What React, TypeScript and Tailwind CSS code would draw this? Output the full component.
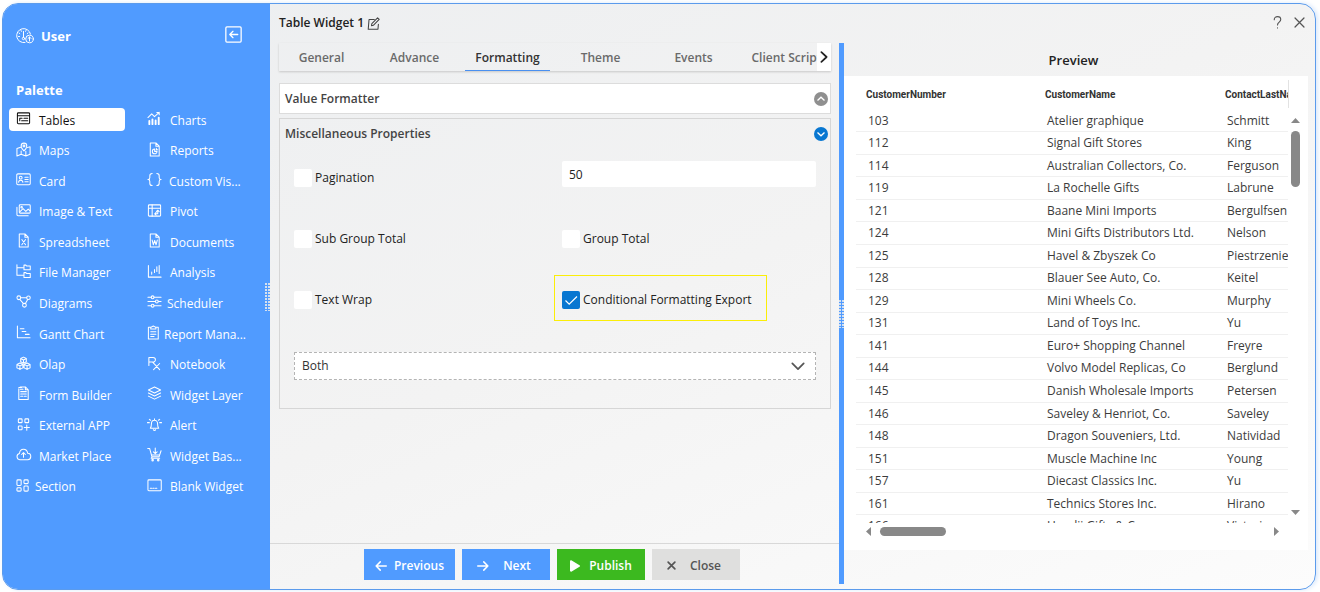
import { useState, type ReactNode } from "react";
import clsx from "clsx";

interface PaletteItem {
  label: string;
  /** icon drawn on a 16 unit grid */
  icon: ReactNode;
  /** a few glyphs sit closer to their label */
  iconClass?: string;
}

const PALETTE: PaletteItem[] = [
  {
    label: "Tables",
    icon: <><rect x="1.5" y="2" width="13" height="11.5" rx="1" /><path d="M1.5 5h13M4 7.8h2.5M8.500 7.800h4M6 10.500h6.500M4 7.800v2.700" /></>,
  },
  {
    label: "Charts",
    icon: <><path d="M1 7l4-4 3 3 5-4.500M10.500 1.500H13V4" /><path d="M2.500 10.500v3.500M5.800 9v5M9.200 10v4M12.500 7v7" strokeWidth="2" /></>,
  },
  {
    label: "Maps",
    icon: <><path d="M5 5.500L1 7v8l4.500-2 5 2 4.500-2V5l-3 1M5.500 9.500V13M10.500 10v5" /><path d="M8.500 9.500C6.500 7.500 5.500 6 5.500 4.200a3 3 0 016 0c0 1.800-1 3.300-3 5.300z" /><circle cx="8.500" cy="4.200" r="1" /></>,
  },
  {
    label: "Reports",
    icon: <><path d="M3.500 1h6L13 4.500V15H3.500zM9.500 1v3.500H13" /><path d="M8.200 7.500a2.500 2.500 0 102.500 2.500H8.200z" /><path d="M10 6.800v1.400h1.400" /></>,
  },
  {
    label: "Card",
    icon: <><rect x=".8" y="2" width="14.400" height="11.500" rx="1.200" /><circle cx="5" cy="6" r="1.500" /><path d="M2.800 11c0-3 4.500-3 4.500 0M9.500 5.500h3.500M9.500 8h3.500M9.500 10.500h3.500" /></>,
  },
  {
    label: "Custom Vis...",
    icon: <path d="M5.500 1.500C3.500 1.500 3 2.500 3 4v2c0 1.200-.8 2-2 2 1.200 0 2 .8 2 2v2c0 1.500.5 2.500 2.500 2.500M10.500 1.500c2 0 2.500 1 2.500 2.500v2c0 1.200.8 2 2 2-1.200 0-2 .8-2 2v2c0 1.500-.5 2.500-2.500 2.500" />,
    iconClass: "w-[15px]",
  },
  {
    label: "Image & Text",
    icon: <><rect x="3.500" y="1.800" width="11.700" height="9" rx="1" /><path d="M1 4.500v8c0 .8.500 1 1.200 1H13M4 9.500l3.500-3.500 3 3L13 6.500l2 2" /><circle cx="6" cy="4.500" r=".8" /></>,
  },
  {
    label: "Pivot",
    icon: <><rect x="1.500" y="2" width="13" height="12" rx="1" /><path d="M1.500 5.500h13M5.500 2v12M8.500 11.500h3V8M10 9.200L11.500 7.700 13 9.200M9.700 10l-1.500 1.500L9.700 13" /></>,
  },
  {
    label: "Spreadsheet",
    icon: <path d="M3.500 1h6L13 4.500V15H3.500zM9.500 1v3.500H13M6.200 7l4 5.500M10.200 7l-4 5.500" />,
  },
  {
    label: "Documents",
    icon: <path d="M3.500 1h6L13 4.500V15H3.500zM9.500 1v3.500H13M5.500 7.500l1.200 5 1.500-4.500 1.500 4.500 1.300-5" />,
  },
  {
    label: "File Manager",
    icon: <><path d="M1 .8v11.200h7M1 4h7" /><path d="M8.500 1.200h2l1 1h3.700v4H8.500zM8.500 9.200h2l1 1h3.700v4.300H8.500z" /></>,
  },
  {
    label: "Analysis",
    icon: <path d="M1.500 1.500V14h13.500M5 8.500V11M8 6v3M10.500 3v5M13 1.500V10" />,
  },
  {
    label: "Diagrams",
    icon: <><circle cx="3" cy="4" r="2" /><circle cx="13.300" cy="4" r="1.900" /><circle cx="9" cy="12" r="2" /><path d="M5 4h6.400M4 5.800l4 4.400M12.500 5.800L10 10.200" /></>,
  },
  {
    label: "Scheduler",
    icon: <><path d="M1 3.500h3.500M7.500 3.500H15M1 8h8M12 8h3M1 12.500h3.500M7.500 12.500H15" /><circle cx="6" cy="3.500" r="1.500" /><circle cx="10.500" cy="8" r="1.500" /><circle cx="6" cy="12.500" r="1.500" /></>,
    iconClass: "w-[13px]",
  },
  {
    label: "Gantt Chart",
    icon: <path d="M1.500 1v12.500H15M4.500 4h4M6.500 7h4M10 10h4" />,
  },
  {
    label: "Report Mana...",
    icon: <><path d="M4 2.500H1.500V15H12V2.500H9.500" /><path d="M4 4.300V2.500L6.700 1l2.800 1.500v1.800zM4 7.300h5.500M4 9.800h5.500M4 12.300h3.500" /></>,
    iconClass: "w-[10px]",
  },
  {
    label: "Olap",
    icon: <path d="M8 1.200l3 1.500v3.500L8 7.700 5 6.200V2.700zM5 2.700l3 1.500 3-1.500M8 4.200v3.500M4.200 7.500l3.200 1.500v3.700l-3.200 1.600L1 12.700V9zM1 9l3.200 1.500L7.400 9M4.200 10.500v3.800M11.800 7.500L15 9v3.700l-3.200 1.600-3.200-1.600V9zM8.600 9l3.200 1.500L15 9M11.800 10.500v3.800" />,
  },
  {
    label: "Notebook",
    icon: <path d="M2 10V1.500h4.500a2.500 2.500 0 010 5H2M6 6.500l7.500 8M13.500 8L7 14.500" />,
  },
  {
    label: "Form Builder",
    icon: <><path d="M4.500 1H10l3 3v10.500H3V3M10 1v3h3" /><path d="M5 6h6M5 8.500h6M5 11h2.500M9 11h2M3 1.500h3M4.500 3.500h3" /></>,
  },
  {
    label: "Widget Layer",
    icon: <path d="M8 1l6.500 3.200L8 7.500 1.500 4.200zM1.500 7.500L8 10.700l6.500-3.200M1.500 10.800L8 14l6.500-3.200" />,
  },
  {
    label: "External APP",
    icon: <><rect x="2.500" y="2" width="4" height="4" rx=".8" /><rect x="9.500" y="2" width="4" height="4" rx=".8" /><rect x="2.500" y="9.500" width="4" height="4" rx=".8" /><path d="M11.500 8.500V14M8.800 11.200h5.500" /></>,
  },
  {
    label: "Alert",
    icon: <><path d="M3.500 12h9c-1-1-1.200-2-1.200-4.500C11.300 5 10 3.500 8 3.500S4.700 5 4.700 7.500C4.700 10 4.500 11 3.500 12zM8 3.500V2M6.800 13.500c.5 1 1.900 1 2.400 0" /><path d="M2.500 2.500l1.300 1M13.500 2.500l-1.300 1M.5 6h2M13.500 6h2" /></>,
  },
  {
    label: "Market Place",
    icon: <><path d="M4 13.500a3.300 3.300 0 01-.3-6.500C4 4 6 2.500 8 2.500s4 1.500 4.500 4.200a3.400 3.400 0 01-.3 6.800z" /><path d="M8 11V6M6 8l2-2 2 2" /></>,
  },
  {
    label: "Widget Bas...",
    icon: <><path d="M.8 1.500h2l2.500 9h7.500L15 4M5.500 10.500L4.500 12h9" /><path d="M8.800 1v6M6.800 5.200l2 2 2-2M5 8.500h8.200" /><circle cx="6" cy="14" r=".8" /><circle cx="12" cy="14" r=".8" /></>,
  },
  {
    label: "Section",
    icon: <><rect x="1" y="2" width="4.500" height="6" rx="1" /><rect x="8.500" y="2" width="4.500" height="4" rx="1" /><rect x="1" y="10.500" width="4.500" height="3.500" rx="1" /><rect x="8.500" y="8.500" width="4.500" height="5.500" rx="1" /></>,
    iconClass: "w-[12px]",
  },
  {
    label: "Blank Widget",
    icon: <><rect x="1" y="2" width="14.200" height="11.500" rx="1" /><path d="M3.500 11h1.500M6.200 11h1.500M9 11h1.500" /></>,
  },
];

const TABS = ["General", "Advance", "Formatting", "Theme", "Events", "Client Script"];

const CUSTOMERS = [
  [103, "Atelier graphique", "Schmitt"],
  [112, "Signal Gift Stores", "King"],
  [114, "Australian Collectors, Co.", "Ferguson"],
  [119, "La Rochelle Gifts", "Labrune"],
  [121, "Baane Mini Imports", "Bergulfsen"],
  [124, "Mini Gifts Distributors Ltd.", "Nelson"],
  [125, "Havel & Zbyszek Co", "Piestrzeniewicz"],
  [128, "Blauer See Auto, Co.", "Keitel"],
  [129, "Mini Wheels Co.", "Murphy"],
  [131, "Land of Toys Inc.", "Yu"],
  [141, "Euro+ Shopping Channel", "Freyre"],
  [144, "Volvo Model Replicas, Co", "Berglund"],
  [145, "Danish Wholesale Imports", "Petersen"],
  [146, "Saveley & Henriot, Co.", "Saveley"],
  [148, "Dragon Souveniers, Ltd.", "Natividad"],
  [151, "Muscle Machine Inc", "Young"],
  [157, "Diecast Classics Inc.", "Yu"],
  [161, "Technics Stores Inc.", "Hirano"],
  [166, "Handji Gifts & Co", "Victorino"],
];

function Icon({ children, className = "w-4 h-4", weight = 1 }: { children: ReactNode; className?: string; weight?: number }) {
  return (
    <svg viewBox="0 0 16 16" className={clsx("shrink-0 overflow-visible", className)} fill="none" stroke="currentColor" strokeWidth={weight} strokeLinecap="round" strokeLinejoin="round" aria-hidden="true">
      {children}
    </svg>
  );
}

/** Dotted drag handle that sits on a splitter edge. */
function Grip({ className }: { className: string }) {
  return (
    <svg viewBox="0 0 5 28" className={clsx("absolute w-[5px] h-7", className)} aria-hidden="true">
      <path d="M1 0v28M4 0v28" stroke="#d5e0ee" strokeWidth="2" strokeDasharray="2 1" />
    </svg>
  );
}

function Sidebar() {
  const [active, setActive] = useState("Tables");

  return (
    <aside className="relative w-[267px] shrink-0 bg-[#509bff] text-white">
      <div className="flex items-start justify-between pl-3 pr-7 pt-[22px]">
        <div className="flex items-center gap-1.5">
          <svg viewBox="0 0 20 18" className="w-5 h-[18px]" fill="none" stroke="currentColor" strokeLinecap="round" aria-hidden="true">
            <path d="M10 15.500A7 7 0 1 1 15.500 7" />
            <path d="M8.500 4.500v6M4 6l.8.600M13 6l-.8.600M3.500 9.500h1M6 3.500l.4.800M11 3.500l-.4.800" />
            <circle cx="8.500" cy="11.500" r="1.200" />
            <circle cx="14.500" cy="12" r="3.800" />
            <path d="M14.500 14v-4M13 11.500l1.500-1.500 1.500 1.500" />
          </svg>
          <span className="text-[13px] leading-5 font-bold">User</span>
        </div>
        <button aria-label="Collapse palette" className="cursor-pointer">
          <Icon className="w-[17px] h-[17px]" weight={1.2}><rect x=".8" y=".8" width="14.400" height="14.400" rx="1" /><path d="M12 8H4.500M7.500 5l-3 3 3 3" /></Icon>
        </button>
      </div>
      <h2 className="pl-[13px] pt-[34px] text-[13px] leading-5 font-bold">Palette</h2>
      <nav className="grid h-[397px] auto-rows-fr grid-cols-[116px_1fr] items-center gap-x-[15px] pl-[6px] pr-2 mt-1">
        {PALETTE.map((item) => (
          <button
            key={item.label}
            onClick={() => setActive(item.label)}
            className={clsx(
              "flex h-[23px] min-w-0 items-center gap-[7px] rounded-[4px] pl-[7px] pt-[3px] text-left text-[12px] leading-5 whitespace-nowrap cursor-pointer",
              active === item.label && "bg-white text-[#111]",
            )}
          >
            <span className={clsx("flex -mt-1", item.iconClass ?? "w-4")}><Icon className="w-[15px] h-[15px]" weight={1.1}>{item.icon}</Icon></span>
            {item.label}
          </button>
        ))}
      </nav>
      <Grip className="right-0 top-[279px]" />
    </aside>
  );
}

function CheckField({ label, defaultChecked = false }: { label: string; defaultChecked?: boolean }) {
  return (
    <label className="flex items-center gap-[3px] text-[12px] leading-5 text-[#222]">
      <span className="grid">
        <input type="checkbox" defaultChecked={defaultChecked} className="peer col-start-1 row-start-1 w-[18px] h-[18px] appearance-none rounded-[2px] bg-white checked:bg-[#0877d1]" />
        <svg viewBox="0 0 18 18" className="pointer-events-none col-start-1 row-start-1 hidden w-[18px] h-[18px] peer-checked:block" fill="none" stroke="#fff" strokeWidth="1.200" aria-hidden="true">
          <path d="M3.500 9.500l3.700 3.700L15 5.500" />
        </svg>
      </span>
      {label}
    </label>
  );
}

function PanelHeading({ title, open }: { title: string; open: boolean }) {
  return (
    <button aria-expanded={open} className="flex w-full items-center justify-between pl-[5px] pr-[2px] h-[29px] cursor-pointer">
      <span className="text-[12px] leading-5 font-semibold text-[#444]">{title}</span>
      <svg viewBox="0 0 14 14" className="w-[14px] h-[14px]" fill="none" aria-hidden="true">
        <circle cx="7" cy="7" r="7" fill={open ? "#0877d1" : "#8f8f8f"} />
        <path d={open ? "M3.500 5.500L7 8.800l3.500-3.300" : "M3.500 8.500L7 5.200l3.500 3.300"} stroke="#fff" strokeWidth="1.300" />
      </svg>
    </button>
  );
}

function Editor() {
  const [tab, setTab] = useState("Formatting");

  return (
    <main className="flex min-w-0 flex-1 flex-col">
      <div className="flex flex-1 flex-col pl-[9px] pr-2">
        <div className="flex items-center gap-[3px] pt-[9px] pb-[10px]">
          <h1 className="text-[12px] leading-5 font-semibold text-[#222]">Table Widget 1</h1>
          <button aria-label="Rename widget" className="text-[#444] cursor-pointer">
            <Icon className="w-[13px] h-[13px]" weight={1.3}>
              <path d="M9 3H2.500L1.500 15H13.500L14 9" />
              <path d="M6 8.200L13 1l2 2-7.200 7.200-2.300.5z" />
            </Icon>
          </button>
        </div>

        <div className="flex h-[28px] shadow-[0_1px_2px_#c8c8c8]">
          <div role="tablist" className="flex min-w-0 flex-1 gap-2 overflow-hidden">
            {TABS.map((name) => (
              <button
                key={name}
                role="tab"
                aria-selected={tab === name}
                onClick={() => setTab(name)}
                className={clsx(
                  "w-[85px] shrink-0 border-b pt-[3px] text-[12px] leading-5 font-semibold whitespace-nowrap cursor-pointer",
                  tab === name ? "border-[#4a90f0] text-[#333]" : "border-transparent text-[#6a6a6a]",
                )}
              >
                {name}
              </button>
            ))}
          </div>
          <button aria-label="More tabs" className="flex w-[14px] shrink-0 items-center justify-center bg-white text-[#222] cursor-pointer">
            <Icon className="w-[14px] h-[14px]" weight={2}><path d="M5 2.500L11 8l-6 5.500" /></Icon>
          </button>
        </div>

        <section className="mt-3 border border-[#dcdcdc] bg-white">
          <PanelHeading title="Value Formatter" open={false} />
        </section>

        <section className="mt-1 border border-[#d6d6d6] pb-7">
          <PanelHeading title="Miscellaneous Properties" open />
          <div className="grid grid-cols-2 gap-x-[14px] px-[14px] pt-[13px]">
            <div className="flex h-[34px] items-center"><CheckField label="Pagination" /></div>
            <input aria-label="Rows per page" defaultValue="50" className="h-[26px] w-full rounded-[2px] bg-white px-[7px] text-[12px] text-[#222] outline-none" />
            <div className="flex h-[88px] items-center"><CheckField label="Sub Group Total" /></div>
            <div className="flex h-[88px] items-center"><CheckField label="Group Total" /></div>
            <div className="flex h-[34px] items-center"><CheckField label="Text Wrap" /></div>
            <div className="-mt-2 -mb-1 -ml-2 flex h-[46px] w-[213px] items-center border border-[#fbee08] pl-[7px] pt-1">
              <CheckField label="Conditional Formatting Export" defaultChecked />
            </div>
          </div>
          <div className="mx-[14px] mt-[35px] grid items-center border border-dashed border-[#b4b4b4] bg-white">
            <select aria-label="Export mode" className="col-start-1 row-start-1 h-[26px] w-full appearance-none pl-[7px] text-[12px] text-[#333] outline-none">
              <option>Both</option>
            </select>
            <span className="pointer-events-none col-start-1 row-start-1 mr-[10px] justify-self-end text-[#555]">
              <Icon className="w-[14px] h-[14px]" weight={2}><path d="M1.500 5L8 11.500 14.500 5" /></Icon>
            </span>
          </div>
        </section>
      </div>

      <footer className="flex justify-center gap-[7px] border-t border-[#d8d8d8] pt-[5px] pb-[9px] pr-[5px] mt-4 text-[12px] leading-5 font-semibold text-white">
        <button className="flex h-[31px] w-[91px] items-center justify-center gap-[7px] bg-[#509bff] pt-0.5 cursor-pointer">
          <Icon className="w-3 h-3" weight={2}><path d="M15 8H1.500M7 2.500L1.500 8 7 13.500" /></Icon>
          Previous
        </button>
        <button className="flex h-[31px] w-[88px] items-center justify-center gap-[14px] bg-[#509bff] pt-0.5 pr-1 cursor-pointer">
          <Icon className="w-3 h-3" weight={2}><path d="M1 8h13.500M9 2.500L14.500 8 9 13.500" /></Icon>
          Next
        </button>
        <button className="flex h-[31px] w-[88px] items-center justify-center gap-[9px] bg-[#3cb91f] pt-0.5 cursor-pointer">
          <svg viewBox="0 0 10 12" className="w-[10px] h-3" fill="currentColor" aria-hidden="true"><path d="M0 1.500C0 .5.800 0 1.700.500L9.500 5.200c.700.400.700 1.200 0 1.600L1.700 11.500C.800 12 0 11.500 0 10.500z" /></svg>
          Publish
        </button>
        <button className="flex h-[31px] w-[88px] items-center justify-center gap-[14px] bg-[#dfdfde] pt-0.5 pr-1 text-[#555] cursor-pointer">
          <Icon className="w-[9px] h-[9px]" weight={3}><path d="M2 2l12 12M14 2L2 14" /></Icon>
          Close
        </button>
      </footer>
    </main>
  );
}

function Preview() {
  return (
    <section className="flex w-[471px] shrink-0 flex-col">
      <div className="flex h-[37px] items-center justify-end gap-[10px] pr-[10px] text-[#555]">
        <button aria-label="Help" className="cursor-pointer">
          <Icon className="w-[13px] h-[13px]" weight={1.4}><path d="M4 4.500C4 2 5.800.8 8 .8s4 1.400 4 3.600C12 7.500 8 7.500 8 11M8 14.500v.3" /></Icon>
        </button>
        <button aria-label="Close editor" className="cursor-pointer">
          <Icon className="w-[11px] h-[11px]" weight={1.8}><path d="M1.500 1.500l13 13M14.500 1.500l-13 13" /></Icon>
        </button>
      </div>
      <h2 className="pr-3 pt-[9px] pb-[6px] text-center text-[13px] leading-5 font-semibold text-[#222]">Preview</h2>

      <div className="mr-[7px] mb-[39px] flex min-h-0 flex-1 flex-col bg-white pl-3">
        <div className="flex min-h-0 flex-1">
          <div className="min-w-0 flex-1 overflow-hidden">
            <table className="h-[462px] w-[540px] table-fixed border-collapse text-left text-[12px] leading-4 text-[#3c3c3c]">
              <thead>
                <tr className="h-[34px] font-['Roboto'] text-[10px] text-[#333]">
                  <th className="pl-[10px] pt-1 font-bold">CustomerNumber</th>
                  <th className="pl-[9px] pt-1 font-bold">CustomerName</th>
                  <th className="pl-[9px] pt-1 font-bold">ContactLastName</th>
                </tr>
              </thead>
              <tbody>
                {CUSTOMERS.map(([id, name, contact]) => (
                  <tr key={id} className="border-b border-[#f0f0f0]">
                    <td className="pl-3">{id}</td>
                    <td className="pl-[11px]">{name}</td>
                    <td className="pl-[11px]">{contact}</td>
                  </tr>
                ))}
              </tbody>
            </table>
          </div>
          <div className="flex w-5 shrink-0 flex-col text-[#888]">
            <div className="mt-1 h-7 border-l border-[#e2e2e2]" />
            <div className="flex flex-1 flex-col items-center pt-[10px] pb-2 pr-1.5">
              <svg viewBox="0 0 9 5" className="w-[9px] h-[5px]" fill="currentColor" aria-hidden="true"><path d="M0 5L4.500 0 9 5z" /></svg>
              <div className="mt-2 h-14 w-[9px] rounded-full bg-[#888]" />
              <svg viewBox="0 0 9 5" className="mt-auto w-[9px] h-[5px]" fill="currentColor" aria-hidden="true"><path d="M0 0h9L4.500 5z" /></svg>
            </div>
          </div>
        </div>
        <div className="flex h-[27px] items-start pl-[10px] pr-[29px] pt-1 text-[#888]">
          <svg viewBox="0 0 5 9" className="w-[5px] h-[9px]" fill="currentColor" aria-hidden="true"><path d="M5 0v9L0 4.500z" /></svg>
          <div className="ml-[9px] h-[9px] w-[66px] rounded-full bg-[#888]" />
          <svg viewBox="0 0 5 9" className="ml-auto w-[5px] h-[9px]" fill="currentColor" aria-hidden="true"><path d="M0 0v9l5-4.500z" /></svg>
        </div>
      </div>
    </section>
  );
}

export default function App() {
  return (
    <div className="h-screen bg-white pt-[3px] pr-1 pb-0.5 pl-0.5 font-['Open_Sans','Noto_Sans',sans-serif]">
      <div className="flex h-full overflow-hidden rounded-2xl border border-[#5b9bec] bg-linear-to-br from-[#eceef0] via-[#f3f3f3] to-[#fcfcfc] shadow-[2px_0_4px_#dbe9fb]">
        <Sidebar />
        <Editor />
        <div className="relative mt-[39px] mb-[5px] w-[5px] shrink-0 bg-[#509bff]">
          <Grip className="left-0 top-[257px]" />
        </div>
        <Preview />
      </div>
    </div>
  );
}
